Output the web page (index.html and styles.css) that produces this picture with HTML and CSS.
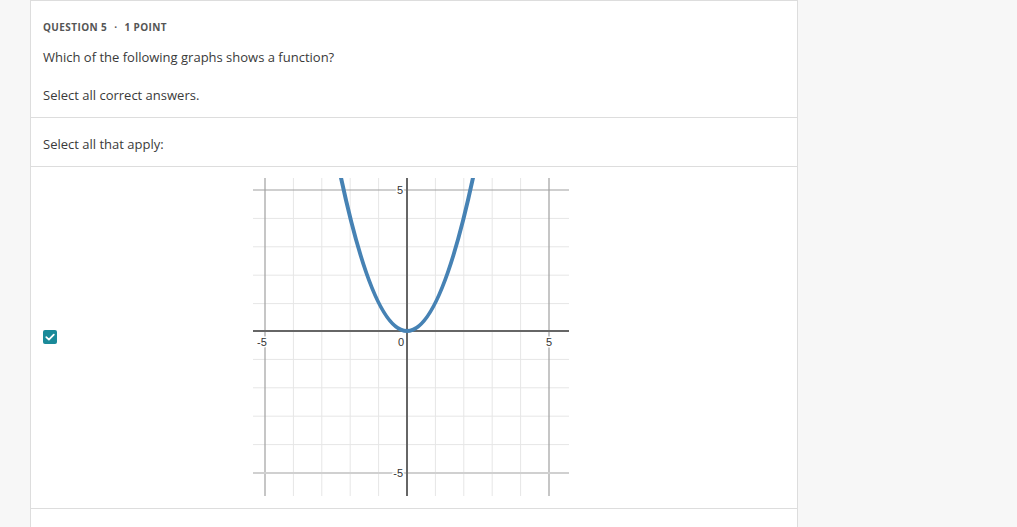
FILE: index.html
```html
<!DOCTYPE html>
<html lang="en">
<head>
  <meta charset="UTF-8" />
  <title>Question 5</title>
  <link rel="stylesheet" href="styles.css">
</head>
<body>
<div class="card">
  <!-- Question header -->
  <section class="question">
    <div class="q-label">Question 5 <span class="dot">&middot;</span> 1 point</div>
    <p class="q-text">Which of the following graphs shows a function?</p>
    <p class="q-text">Select all correct answers.</p>
  </section>

  <section class="instructions">
    <p>Select all that apply:</p>
  </section>

  <!-- Answer option -->
  <section class="option">
    <span class="checkbox">
      <svg viewBox="0 0 14 14" width="14" height="14">
        <path d="M3.3 7.2 L5.9 9.6 L10.8 4.6" fill="none" stroke="#fff" stroke-width="1.8" stroke-linecap="round" stroke-linejoin="round"/>
      </svg>
    </span>
    <svg class="graph" viewBox="0 0 316 318" width="316" height="318">
      <g stroke="#e6e6e6" stroke-width="1">
        <line x1="40.4" y1="0" x2="40.4" y2="318"/>
        <line x1="68.8" y1="0" x2="68.8" y2="318"/>
        <line x1="97.2" y1="0" x2="97.2" y2="318"/>
        <line x1="125.6" y1="0" x2="125.6" y2="318"/>
        <line x1="182.4" y1="0" x2="182.4" y2="318"/>
        <line x1="210.8" y1="0" x2="210.8" y2="318"/>
        <line x1="239.2" y1="0" x2="239.2" y2="318"/>
        <line x1="267.6" y1="0" x2="267.6" y2="318"/>
        <line x1="0" y1="40.4" x2="316" y2="40.4"/>
        <line x1="0" y1="68.8" x2="316" y2="68.8"/>
        <line x1="0" y1="97.2" x2="316" y2="97.2"/>
        <line x1="0" y1="125.6" x2="316" y2="125.6"/>
        <line x1="0" y1="181.4" x2="316" y2="181.4"/>
        <line x1="0" y1="209.8" x2="316" y2="209.8"/>
        <line x1="0" y1="238.2" x2="316" y2="238.2"/>
        <line x1="0" y1="266.6" x2="316" y2="266.6"/>
      </g>
      <g stroke="#a0a0a0" stroke-width="1.2">
        <line x1="12" y1="0" x2="12" y2="318"/>
        <line x1="296" y1="0" x2="296" y2="318"/>
        <line x1="0" y1="12" x2="316" y2="12"/>
      </g>
      <line x1="0" y1="295" x2="316" y2="295" stroke="#d0d0d0" stroke-width="2"/>
      <g stroke="#666" stroke-width="2">
        <line x1="154" y1="0" x2="154" y2="318"/>
        <line x1="0" y1="153" x2="316" y2="153"/>
      </g>
      <g class="tick-labels">
        <text x="9" y="168" text-anchor="middle">-5</text>
        <text x="148" y="168" text-anchor="middle">0</text>
        <text x="296" y="168" text-anchor="middle">5</text>
        <text x="150" y="16" text-anchor="end">5</text>
        <text x="150" y="299" text-anchor="end">-5</text>
      </g>
      <path d="M85.8 -10.6 Q154 316.6 222.2 -10.6" fill="none" stroke="#4682b4" stroke-width="4"/>
    </svg>
  </section>

  <section class="next"></section>
</div>
</body>
</html>
```

FILE: styles.css
```css
/* Global */
body {
  margin: 0;
  padding: 0;
  background: #f7f7f7;
  font-family: "Open Sans", Arial, sans-serif;
  color: #3a3a3a;
}
/* Card */
.card {
  width: 766px;
  margin-left: 30px;
  background: #fff;
  border: 1px solid #ddd;
}
.card section {
  padding: 0 12px;
  border-bottom: 1px solid #ddd;
}
/* Question header */
.question {
  padding-top: 19px !important;
  padding-bottom: 13px !important;
}
.q-label {
  font-size: 10px;
  line-height: 14px;
  font-weight: bold;
  text-transform: uppercase;
  letter-spacing: 0.4px;
  color: #555;
}
.q-label .dot {
  margin: 0 4px;
}
.q-text {
  font-size: 13px;
  line-height: 18px;
  margin: 14px 0 0;
}
.q-text + .q-text {
  margin-top: 20px;
}
/* Instructions */
.instructions p {
  font-size: 13px;
  line-height: 18px;
  margin: 0;
  padding: 17px 0 13px;
}
/* Answer option */
.option {
  display: flex;
  align-items: center;
  gap: 196px;
  padding-top: 11px !important;
  padding-bottom: 12px !important;
}
.checkbox {
  display: flex;
  width: 14px;
  height: 14px;
  border-radius: 2px;
  background: #1a8a99;
}
.graph {
  display: block;
}
.tick-labels text {
  font-family: Arial, "Liberation Sans", sans-serif;
  font-size: 11px;
  fill: #333;
  stroke: #fff;
  stroke-width: 3px;
  paint-order: stroke;
}
.next {
  height: 60px;
}
```
